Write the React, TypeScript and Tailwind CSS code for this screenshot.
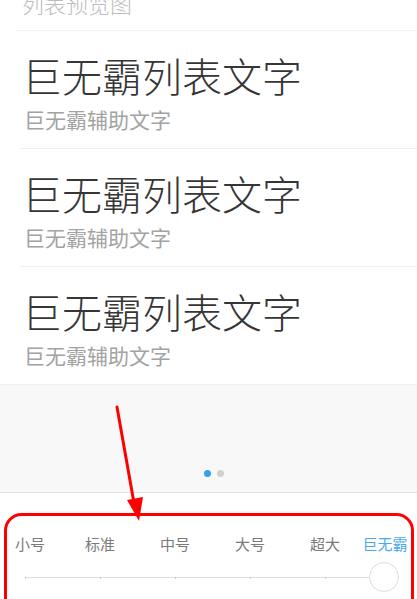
import React from "react";

const font = { fontFamily: '"Noto Sans CJK SC", "Noto Sans", sans-serif' };

function Item() {
  return (
    <div className="pl-[22px] pt-[24px] pb-[17px]">
      <div className="text-[40px] leading-[40px] font-light text-[#363636]">巨无霸列表文字</div>
      <div className="mt-[12px] pl-[2px] text-[21px] leading-[24px] text-[#a3a3a3]">巨无霸辅助文字</div>
    </div>
  );
}

const labels = [
  { t: "小号", w: "w-[60px]" },
  { t: "标准", w: "w-[80px]" },
  { t: "中号", w: "w-[70px]" },
  { t: "大号", w: "w-[80px]" },
  { t: "超大", w: "w-[70px]" },
];

export default function App() {
  return (
    <div className="relative w-[417px] h-[599px] overflow-hidden bg-white" style={font}>
      {/* header */}
      <div className="h-[30px] pl-[22px] flex flex-col">
        <div className="-mt-[8px] text-[22px] leading-[22px] font-light text-[#bdbdbd]">列表预览图</div>
      </div>
      <div className="ml-[15px] h-px bg-[#f2f2f2]" />
      <Item />
      <div className="ml-[20px] h-px bg-[#f0f0f0]" />
      <Item />
      <div className="ml-[20px] h-px bg-[#f0f0f0]" />
      <Item />
      {/* gray preview area */}
      <div className="h-[109px] bg-[#f8f8f8] border-t border-[#f0f0f0] border-b border-b-[#e3e3e3] flex items-end justify-center pb-[15px]">
        <div className="flex items-center gap-[6px] ml-[10px]">
          <div className="w-[7px] h-[7px] rounded-full bg-[#2ea3f2]" />
          <div className="w-[7px] h-[7px] rounded-full bg-[#d0d0d0]" />
        </div>
      </div>
      {/* bottom selector */}
      <div className="bg-white flex flex-col">
        <div className="pt-[42px] flex text-[15px] leading-[18px] text-[#7a7a7a]">
          {labels.map((l) => (
            <div key={l.t} className={`${l.w} text-center`}>{l.t}</div>
          ))}
          <div className="w-[50px] text-center text-[#4aa8ee]">巨无霸</div>
        </div>
        <div className="relative mt-[24px] h-[1px] ml-[25px] w-[345px] bg-[#dedede] flex gap-[74px]">
          <div className="w-px h-[2px] -mt-[0.5px] bg-[#c8c8c8]" />
          <div className="w-px h-[2px] -mt-[0.5px] bg-[#c8c8c8]" />
          <div className="w-px h-[2px] -mt-[0.5px] bg-[#c8c8c8]" />
          <div className="w-px h-[2px] -mt-[0.5px] bg-[#c8c8c8]" />
          <div className="w-px h-[2px] -mt-[0.5px] bg-[#c8c8c8]" />
          <div className="absolute left-[344px] -top-[15px] w-[30px] h-[30px] rounded-full bg-white border border-[#dcdcdc]" />
        </div>
      </div>
      {/* red annotation overlay */}
      <svg className="absolute inset-0 pointer-events-none" width="417" height="599" viewBox="0 0 417 599">
        <rect x="5.5" y="514.5" width="407" height="100" rx="16" ry="16" fill="none" stroke="#ff0000" strokeWidth="3" />
        <line x1="117" y1="407" x2="134" y2="503" stroke="#ff0000" strokeWidth="3" strokeLinecap="round" />
        <polygon points="127,500 143,497 139,521" fill="#ff0000" />
      </svg>
    </div>
  );
}
